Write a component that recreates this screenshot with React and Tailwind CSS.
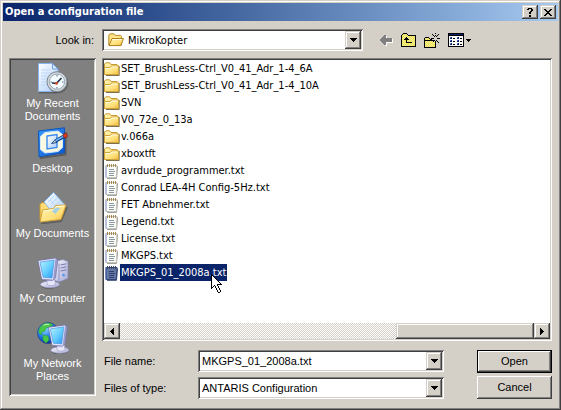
import { useState } from 'react'

const TAHOMA = "font-['DejaVu_Sans_Condensed','DejaVu_Sans',sans-serif]"
const SUNKEN =
  'p-[2px] shadow-[inset_1px_1px_#808080,inset_-1px_-1px_#fff,inset_2px_2px_#404040,inset_-2px_-2px_#d4d0c8]'
const RAISED =
  'bg-[#d4d0c8] shadow-[inset_-1px_-1px_#404040,inset_1px_1px_#d4d0c8,inset_-2px_-2px_#808080,inset_2px_2px_#fff]'
const PUSH = 'bg-[#d4d0c8] shadow-[inset_-1px_-1px_#404040,inset_1px_1px_#fff,inset_-2px_-2px_#808080]'

const PALETTE = { k: '#000', w: '#fff', g: '#808080', n: '#0a246a', b: '#5a7ad8' }

const HELP = ['.kkkk.', 'kk..kk', '....kk', '...kk.', '..kk..', '..kk..', '......', '..kk..', '..kk..']
const CLOSE = ['kk....kk', '.kk..kk.', '..kkkk..', '...kk...', '..kkkk..', '.kk..kk.', 'kk....kk']
const DOWN = ['kkkkkkk', '.kkkkk.', '..kkk..', '...k...']
const SMALL_DOWN = ['kkkkk', '.kkk.', '..k..']
const LEFT = ['...k', '..kk', '.kkk', 'kkkk', '.kkk', '..kk', '...k']
const RIGHT = ['k...', 'kk..', 'kkk.', 'kkkk', 'kkk.', 'kk..', 'k...']
const BACK = [
  '....gg.......',
  '...gggw......',
  '..ggggw......',
  '.ggggggggggg.',
  'ggggggggggggw',
  'ggggggggggggw',
  '.gggggggggggw',
  '..ggggwwwwwww',
  '...gggw......',
  '....ggw......',
  '.....ww......',
]
const UP = [
  '..kkkk.........',
  '.kyyyyk........',
  'kyyyyyykkkkkkkk',
  'kyyyyyyyyyyyyyk',
  'kyyyykyyyyyyyyk',
  'kyyykkkyyyyyyyk',
  'kyykkkkkyyyyyyk',
  'kyyyykyyyyyyyyk',
  'kyyyykyyyyyyyyk',
  'kyyyykkkkkkyyyk',
  'kyyyyyyyyyyyyyk',
  'kyyyyyyyyyyyyyk',
  'kyyyyyyyyyyyyyk',
  'kkkkkkkkkkkkkkk',
]
const NEW_FOLDER = [
  '...........k....',
  '........k.....k.',
  '.........k.k.k..',
  '..........k.k...',
  '.kkkk...........',
  'kyyyyk.kkk...kkk',
  'kyyyyykk........',
  'kkkkkkkkkkk.k...',
  'kyyyyyyyykyk.k..',
  'kyyyyyyyyyyk..k.',
  'kyyyyyyyyyyk....',
  'kyyyyyyyyyyk....',
  'kyyyyyyyyyyk....',
  'kyyyyyyyyyyk....',
  'kkkkkkkkkkkk....',
]
const VIEW = [
  'kkkkkkkkkkkkkkkk',
  'knnnnnnnnnnnnnnk',
  'kkkkkkkkkkkkkkkk',
  'kwwwwwwwwwwwwwwk',
  'kwbnwwwwwbnwwwwk',
  'kwnnwkkwwnnwkkwk',
  'kwwwwwwwwwwwwwwk',
  'kwbnwwwwwbnwwwwk',
  'kwnnwkkwwnnwkkwk',
  'kwwwwwwwwwwwwwwk',
  'kwbnwwwwwbnwwwwk',
  'kwnnwkkwwnnwkkwk',
  'kwwwwwwwwwwwwwwk',
  'kkkkkkkkkkkkkkkk',
]
const CURSOR = [
  'k...........',
  'kk..........',
  'kwk.........',
  'kwwk........',
  'kwwwk.......',
  'kwwwwk......',
  'kwwwwwk.....',
  'kwwwwwwk....',
  'kwwwwwwwk...',
  'kwwwwwwwwk..',
  'kwwwwwkkkkk.',
  'kwwkwwk.....',
  'kwk.kwwk....',
  'kk..kwwk....',
  'k....kwwk...',
  '.....kwwk...',
  '......kwwk..',
  '......kwwk..',
  '.......kk...',
]

// one rect per pixel, "y" is the dithered folder yellow
function Pixels({ map, className = '' }) {
  const fill = (c, x, y) => (c === 'y' ? ((x + y) % 2 ? '#f8ee40' : '#e6e0a4') : PALETTE[c])
  return (
    <svg
      width={map[0].length}
      height={map.length}
      shapeRendering="crispEdges"
      aria-hidden="true"
      className={`shrink-0 ${className}`}
    >
      {map.flatMap((row, y) =>
        [...row].map((c, x) =>
          c === '.' ? null : <rect key={`${x}-${y}`} x={x} y={y} width="1" height="1" fill={fill(c, x, y)} />
        )
      )}
    </svg>
  )
}

function Gradients() {
  return (
    <svg width="0" height="0" className="absolute" aria-hidden="true">
      <defs>
        <linearGradient id="folder" x1="0" y1="0" x2="1" y2="1">
          <stop offset="0" stopColor="#fff6b8" />
          <stop offset="0.6" stopColor="#ffe07c" />
          <stop offset="1" stopColor="#efb93c" />
        </linearGradient>
        <linearGradient id="paper" x1="0" y1="0" x2="1" y2="1">
          <stop offset="0" stopColor="#ffffff" />
          <stop offset="1" stopColor="#a9cdf8" />
        </linearGradient>
        <linearGradient id="screen" x1="0" y1="0" x2="1" y2="1">
          <stop offset="0" stopColor="#b8f4ff" />
          <stop offset="0.55" stopColor="#62ccff" />
          <stop offset="1" stopColor="#2b94f4" />
        </linearGradient>
        <linearGradient id="case" x1="0" y1="0" x2="1" y2="1">
          <stop offset="0" stopColor="#f6f6ff" />
          <stop offset="1" stopColor="#a9aad4" />
        </linearGradient>
        <linearGradient id="blue" x1="0" y1="0" x2="1" y2="1">
          <stop offset="0" stopColor="#3a9cff" />
          <stop offset="1" stopColor="#0a55cc" />
        </linearGradient>
        <radialGradient id="globe" cx="0.35" cy="0.3" r="0.75">
          <stop offset="0" stopColor="#9adcff" />
          <stop offset="0.5" stopColor="#2a80ec" />
          <stop offset="1" stopColor="#0a2f8c" />
        </radialGradient>
      </defs>
    </svg>
  )
}

function FolderIcon() {
  return (
    <svg width="16" height="16" viewBox="0 0 16 16" aria-hidden="true" className="shrink-0">
      <path d="M2 14.5h13.2V5" fill="none" stroke="#5c4c22" opacity="0.8" />
      <path d="M.5 13.5V3l1.200-1.200h4L7 3.500h6l1 1v9z" fill="url(#folder)" stroke="#c39a36" />
      <path d="M.5 6.500H6l1.500-1.500H14.500v8.500H.5z" fill="url(#folder)" stroke="#d0a23a" />
      <path d="M1.500 7.500h5L8 6h5.500" fill="none" stroke="#fffce0" />
    </svg>
  )
}

function OpenFolderIcon() {
  return (
    <svg width="16" height="16" viewBox="0 0 16 16" aria-hidden="true" className="shrink-0">
      <path d="M.8 13V3L2 1.8h4L7.4 3.4h5.2l.9.9V13z" fill="#ffe28a" stroke="#b98a22" />
      <path d="M1 13.6 4 6.5h11.4l-2.4 7.1z" fill="url(#folder)" stroke="#b08018" />
      <path d="M4.600 7.500h9.400" stroke="#fffbd8" />
    </svg>
  )
}

function TextIcon({ selected }) {
  return (
    <svg width="16" height="16" viewBox="0 0 16 16" aria-hidden="true" className="shrink-0">
      <path d="M3 15.300h9.500l1-12" fill="none" stroke={selected ? '#30406e' : '#8c8a84'} />
      <path
        d="M2 2.500h11l-.8 12H2z"
        fill={selected ? '#64779f' : '#fcfcf8'}
        stroke={selected ? '#30447c' : '#c4c4be'}
      />
      <path d="M2 2.500v12" stroke={selected ? '#4a65b4' : '#93a2dc'} />
      <path
        d="M5 6.500h5M5 8.500h6M5 10.500h5M5 12.500h5"
        stroke={selected ? '#2c3f78' : '#8a98a0'}
        shapeRendering="crispEdges"
      />
      <path
        d="M3.500 1v3M5.500 1v3M7.500 1v3M9.500 1v3M11.500 1v3"
        stroke={selected ? '#3c4668' : '#a88a50'}
        shapeRendering="crispEdges"
      />
    </svg>
  )
}

function RecentIcon() {
  return (
    <svg width="32" height="32" viewBox="0 0 32 32" aria-hidden="true">
      <path d="M2 30.5h18" stroke="#444" strokeWidth="2" opacity="0.5" />
      <path d="M1.5 1.5h14l5.5 5.500v22.500h-19.500z" fill="url(#paper)" stroke="#8ab4ee" />
      <path d="M15.5 1.5V7H21z" fill="#d9eaff" stroke="#6f9fe4" />
      <path d="M4 8h9M4 11h14M4 14h8M4 17h6M4 20h5M4 23h6" stroke="#bcd5f8" />
      <circle cx="21" cy="21" r="10.3" fill="#4a4a4a" opacity="0.6" />
      <circle cx="20" cy="19.7" r="10" fill="#d2d7dc" stroke="#7c8590" />
      <circle cx="20" cy="19.7" r="7.6" fill="#f5fcff" stroke="#98a6b4" />
      <path d="M20 13v1.5M20 25v1.5M13.5 20H15M25 20h1.5" stroke="#46658c" />
      <path d="m15 21 4.500.4 5-5.400" fill="none" stroke="#26354c" strokeWidth="1.6" />
      <circle cx="19.5" cy="21.4" r="1.4" fill="#e04a20" />
    </svg>
  )
}

function DesktopIcon() {
  return (
    <svg width="32" height="32" viewBox="0 0 32 32" aria-hidden="true">
      <path d="M3 31 28.5 27.5V5" fill="none" stroke="#333" strokeWidth="2" opacity="0.5" />
      <path d="M1.5 4 27.5.8v25L2 29.8z" fill="url(#blue)" stroke="#0f56b8" />
      <path d="m8 5.500 13-1.500 4.500 3.500v13L21 24.500 8 26l-4.500-3.500v-13z" fill="#fbf9e2" stroke="#cfe8ff" />
      <path d="m10 9 10-1.500v13L10 22z" fill="url(#paper)" stroke="#3a8cec" strokeWidth="1.4" />
      <path d="m14.500 16.500 3.500-3.500 2 2.500z" fill="#f0d8a0" stroke="#174f9a" />
      <path d="m18.500 14 8-4.300" stroke="#123f86" strokeWidth="3.600" />
      <path d="m18.500 13.700 8-4.300" stroke="#6ab8ff" strokeWidth="1.600" />
      <circle cx="28.300" cy="8.600" r="2.200" fill="#d83a1c" stroke="#7c1c0c" strokeWidth="0.600" />
    </svg>
  )
}

function DocumentsIcon() {
  return (
    <svg width="32" height="32" viewBox="0 0 32 32" aria-hidden="true">
      <path d="M4 31.500 24 29 30 15" fill="none" stroke="#333" strokeWidth="2" opacity="0.4" />
      <path d="M3 28V12.500l2-2 5 1 2 3 15-3 1.500 2L25 25z" fill="#ffdc74" stroke="#c8962a" />
      <path d="m7 10 9.500-9.500L28 13 17.500 23z" fill="url(#paper)" stroke="#8abcf0" />
      <path d="m11 10 6-6M14 12l6-6M17 15l6-6M13 8l9 9" stroke="#b4d6f8" />
      <path d="m3 30 2.500-12 11-1.500 2-3 10.500-.5-5 14.500z" fill="url(#folder)" stroke="#d0a034" />
      <path d="m6.500 19 10.500-1.500 2-3 8.500-.5" fill="none" stroke="#fffde4" />
      <path d="m15 19.500 3.500-4 5 .5-5 6z" fill="#8fcbf8" opacity="0.8" />
    </svg>
  )
}

function Monitor() {
  return (
    <>
      <path d="M4 29c3 3 11 3.500 18 0" fill="none" stroke="#333" opacity="0.5" />
      <ellipse cx="13" cy="27.500" rx="9.500" ry="3.300" fill="url(#case)" stroke="#9495c0" strokeWidth="0.700" />
      <path d="m10 22 7.500-.5 1 6c-3 1.500-6 1.500-8.500 0z" fill="#e6e6f8" stroke="#a4a5cc" strokeWidth="0.700" />
      <path d="m1 3.500 17.500-2.500 2.500 1.500-2.500 18.500-3 2.500L5 23z" fill="#9a9bcc" stroke="#6d6da4" strokeWidth="0.600" />
      <path d="m1.500 4 17-2.500L16 22.500 5 21.800z" fill="#e8e8fa" />
      <path d="M3 5.200 17.200 3l-2.200 18-8.800-.8z" fill="url(#screen)" stroke="#4a94e0" strokeWidth="0.700" />
    </>
  )
}

function ComputerIcon() {
  return (
    <svg width="32" height="32" viewBox="0 0 32 32" aria-hidden="true">
      <path d="m17 4.500 9-2 5 2v17L22 25l-5-2z" fill="url(#case)" stroke="#8284b4" strokeWidth="0.700" />
      <path d="M22 6.500V24.500" stroke="#8c8fc0" />
      <path d="m23.500 8 6-1.200M23.500 11l6-1.200M23.500 14l6-1.200" stroke="#7779b0" />
      <circle cx="26.500" cy="18" r="1.500" fill="#5e9ae8" />
      <Monitor />
    </svg>
  )
}

function NetworkIcon() {
  return (
    <svg width="32" height="32" viewBox="0 0 32 32" aria-hidden="true">
      <circle cx="11" cy="11" r="10.500" fill="url(#globe)" stroke="#123c84" strokeWidth="0.600" />
      <path d="M3 5.500 7 1.500l6-.5 3 2-3 2-4 1-1 3-3 1-1 3-2.500-3zM6 13l5 1 1 4-3 3-3-3z" fill="#48c648" stroke="#1f9434" strokeWidth="0.500" />
      <path d="M6.500 3.500 9 2.200l3 .3" fill="none" stroke="#c8f8b8" />
      <g transform="translate(10.500 2) scale(0.95)">
        <Monitor />
      </g>
    </svg>
  )
}

const places = [
  { label: 'My Recent Documents', Icon: RecentIcon },
  { label: 'Desktop', Icon: DesktopIcon },
  { label: 'My Documents', Icon: DocumentsIcon },
  { label: 'My Computer', Icon: ComputerIcon },
  { label: 'My Network Places', Icon: NetworkIcon },
]

const files = [
  { name: 'SET_BrushLess-Ctrl_V0_41_Adr_1-4_6A', folder: true },
  { name: 'SET_BrushLess-Ctrl_V0_41_Adr_1-4_10A', folder: true },
  { name: 'SVN', folder: true },
  { name: 'V0_72e_0_13a', folder: true },
  { name: 'v.066a', folder: true },
  { name: 'xboxtft', folder: true },
  { name: 'avrdude_programmer.txt' },
  { name: 'Conrad LEA-4H Config-5Hz.txt' },
  { name: 'FET Abnehmer.txt' },
  { name: 'Legend.txt' },
  { name: 'License.txt' },
  { name: 'MKGPS.txt' },
  { name: 'MKGPS_01_2008a.txt' },
]

function ArrowBox({ map = DOWN }) {
  return (
    <span className={`flex w-4 shrink-0 items-center justify-center ${RAISED}`}>
      <Pixels map={map} />
    </span>
  )
}

function TitleBar() {
  return (
    <header className="flex h-[18px] items-center gap-0.5 bg-linear-to-r from-[#0a246a] to-[#a6caf0] px-0.5">
      <h1 className={`flex-1 text-[11px] leading-4 font-bold text-white ${TAHOMA}`}>Open a configuration file</h1>
      <button aria-label="Help" className={`flex h-3.5 w-4 items-center justify-center ${RAISED}`}>
        <Pixels map={HELP} />
      </button>
      <button aria-label="Close" className={`flex h-3.5 w-4 items-center justify-center ${RAISED}`}>
        <Pixels map={CLOSE} />
      </button>
    </header>
  )
}

function LookIn() {
  return (
    <div className="flex h-[22px] items-center gap-1.5">
      <label htmlFor="look-in" className="w-[87px] pr-0.5 text-right">
        Look in:
      </label>
      <div className={`flex h-full flex-1 bg-white ${SUNKEN}`}>
        <span className="flex items-center px-1">
          <OpenFolderIcon />
        </span>
        <select id="look-in" className={`min-w-0 flex-1 appearance-none outline-none ${TAHOMA}`}>
          <option>MikroKopter</option>
        </select>
        <ArrowBox />
      </div>
      <div className="flex w-[183px] items-center gap-2 pl-[11px]">
        <button aria-label="Back">
          <Pixels map={BACK} />
        </button>
        <button aria-label="Up one level">
          <Pixels map={UP} />
        </button>
        <button aria-label="New folder">
          <Pixels map={NEW_FOLDER} />
        </button>
        <button aria-label="Views" className="flex items-center gap-0.5">
          <Pixels map={VIEW} />
          <Pixels map={SMALL_DOWN} />
        </button>
      </div>
    </div>
  )
}

function Places() {
  return (
    <nav className={`w-[87px] shrink-0 self-start bg-[#808080] ${SUNKEN}`}>
      <ul className="pt-0.5 pb-[7px] text-white">
        {places.map(({ label, Icon }) => (
          <li key={label} className="h-[65px]">
            <button className="flex w-full flex-col items-center gap-[3px] px-1 leading-[13px]">
              <Icon />
              <span>{label}</span>
            </button>
          </li>
        ))}
      </ul>
    </nav>
  )
}

function FileList({ selected, onSelect }) {
  return (
    <div className={`bg-white ${SUNKEN}`}>
      <ul className={`pb-[42px] ${TAHOMA}`}>
        {files.map(({ name, folder }) => (
          <li key={name} className="flex h-[17px]">
            <button className="relative flex items-center" onClick={() => onSelect(name)}>
              {folder ? <FolderIcon /> : <TextIcon selected={name === selected} />}
              <span
                className={`h-[17px] px-px leading-[18px] whitespace-nowrap ${name === selected ? 'bg-[#0a246a] text-white' : ''}`}
              >
                {name}
              </span>
              {name === selected && <Pixels map={CURSOR} className="absolute top-2.5 right-1" />}
            </button>
          </li>
        ))}
      </ul>
      {/* horizontal scrollbar */}
      <div className="flex h-4 bg-[repeating-conic-gradient(#fff_0_25%,#d4d0c8_0_50%)] bg-[length:2px_2px]">
        <button aria-label="Scroll left" className="flex">
          <ArrowBox map={LEFT} />
        </button>
        <div className={`ml-auto w-[31%] ${RAISED}`} />
        <button aria-label="Scroll right" className="flex">
          <ArrowBox map={RIGHT} />
        </button>
      </div>
    </div>
  )
}

function FileForm({ fileName, onChange }) {
  return (
    <form className="flex gap-[33px]" onSubmit={(e) => e.preventDefault()}>
      <div className="flex flex-1 flex-col gap-[5px]">
        <div className="flex h-[22px] items-center">
          <label htmlFor="file-name" className="w-24 pl-0.5">
            File name:
          </label>
          <div className={`flex h-full flex-1 bg-white ${SUNKEN}`}>
            <input
              id="file-name"
              value={fileName}
              onChange={(e) => onChange(e.target.value)}
              className="min-w-0 flex-1 px-0.5 outline-none"
            />
            <ArrowBox />
          </div>
        </div>
        <div className="flex h-[22px] items-center">
          <label htmlFor="file-type" className="w-24 pl-0.5">
            Files of type:
          </label>
          <div className={`flex h-full flex-1 bg-white ${SUNKEN}`}>
            <select id="file-type" className="min-w-0 flex-1 appearance-none px-0.5 outline-none">
              <option>ANTARIS Configuration</option>
            </select>
            <ArrowBox />
          </div>
        </div>
      </div>
      <div className="flex w-[75px] flex-col gap-[3px]">
        <div className="flex h-[23px] bg-black p-px">
          <button type="submit" className={`flex-1 ${PUSH}`}>
            Open
          </button>
        </div>
        <button type="button" className={`h-[23px] ${PUSH}`}>
          Cancel
        </button>
      </div>
    </form>
  )
}

export default function App() {
  const [fileName, setFileName] = useState('MKGPS_01_2008a.txt')

  return (
    <div
      className="bg-[#d4d0c8] p-[3px] font-['Liberation_Sans',Arial,sans-serif] text-[11px] leading-[13px] text-black
        shadow-[inset_-1px_-1px_#404040,inset_1px_1px_#d4d0c8,inset_-2px_-2px_#808080,inset_2px_2px_#fff]"
    >
      <Gradients />
      <TitleBar />
      <main className="flex flex-col gap-[7px] px-1.5 py-2">
        <LookIn />
        <div className="flex gap-1.5">
          <Places />
          <div className="flex min-w-0 flex-1 flex-col gap-[9px]">
            <FileList selected={fileName} onSelect={setFileName} />
            <FileForm fileName={fileName} onChange={setFileName} />
          </div>
        </div>
      </main>
    </div>
  )
}
